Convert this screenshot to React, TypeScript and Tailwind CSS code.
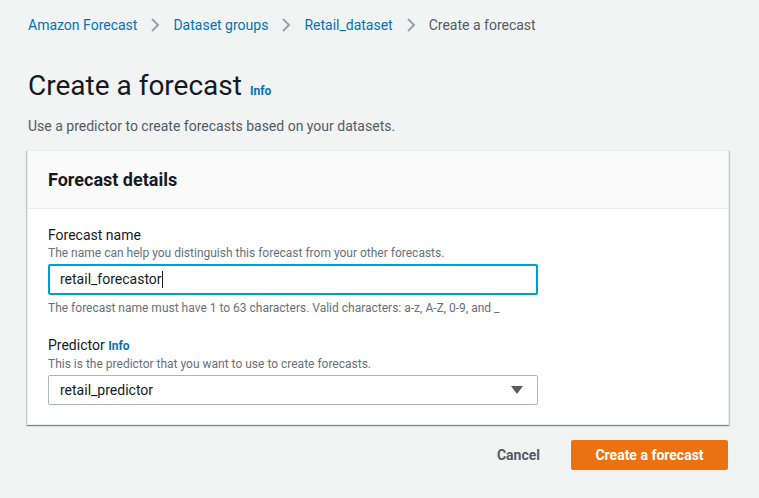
import React from "react";

const font = { fontFamily: "Roboto, 'Liberation Sans', sans-serif" };

function Chevron() {
  return (
    <svg width="10" height="16" viewBox="0 0 10 16" className="mx-[13px]">
      <path d="M2 2 L8 8 L2 14" fill="none" stroke="#95a5a6" strokeWidth="2" />
    </svg>
  );
}

export default function App() {
  return (
    <div className="min-h-[498px] w-full bg-[#f2f3f3] text-[#16191f]" style={font}>
      <div className="px-[28px]">
        <nav className="flex items-center pt-[16px] h-[34px] text-[14px]">
          <span className="text-[#0073bb]">Amazon Forecast</span>
          <Chevron />
          <span className="text-[#0073bb]">Dataset groups</span>
          <Chevron />
          <span className="text-[#0073bb]">Retail_dataset</span>
          <Chevron />
          <span className="text-[#545b64]">Create a forecast</span>
        </nav>
        <div className="mt-[34px] flex items-baseline">
          <h1 className="text-[28px] leading-[36px] font-normal">Create a forecast</h1>
          <span className="ml-[8px] text-[12px] font-bold text-[#0073bb]">Info</span>
        </div>
        <p className="mt-[12px] text-[14px] leading-[20px] text-[#545b64]">
          Use a predictor to create forecasts based on your datasets.
        </p>
        <div className="mt-[14px] w-[702px] -ml-px bg-white border border-[#eaeded] shadow-[0_1px_1px_0_rgba(0,28,36,0.3),1px_1px_1px_0_rgba(0,28,36,0.15),-1px_1px_1px_0_rgba(0,28,36,0.15)]">
          <div className="h-[58px] bg-[#fafafa] border-b border-[#eaeded] flex items-center px-[20px]">
            <h2 className="text-[18px] font-bold">Forecast details</h2>
          </div>
          <div className="px-[20px] pt-[16px] pb-[19px]">
            <div className="text-[14px] leading-[20px]">Forecast name</div>
            <div className="text-[12px] leading-[16px] text-[#687078]">
              The name can help you distinguish this forecast from your other forecasts.
            </div>
            <div className="mt-[3px] w-[490px] h-[31px] border-2 border-[#00a1c9] rounded-[2px] flex items-center px-[10px] text-[14px]">
              retail_forecastor<span className="inline-block w-px h-[17px] bg-[#16191f]"></span>
            </div>
            <div className="mt-[5px] text-[12px] leading-[16px] text-[#687078]">
              The forecast name must have 1 to 63 characters. Valid characters: a-z, A-Z, 0-9, and _
            </div>
            <div className="mt-[19px] text-[14px] leading-[20px]">
              Predictor <span className="text-[12px] font-bold text-[#0073bb]">Info</span>
            </div>
            <div className="text-[12px] leading-[16px] text-[#687078]">
              This is the predictor that you want to use to create forecasts.
            </div>
            <div className="mt-[3px] w-[490px] h-[30px] border border-[#aab7b8] rounded-[2px] flex items-center justify-between pl-[11px] pr-[14px] text-[14px]">
              <span>retail_predictor</span>
              <svg width="12" height="10" viewBox="0 0 12 10">
                <path d="M0 1 L12 1 L6 9 Z" fill="#545b64" />
              </svg>
            </div>
          </div>
        </div>
        <div className="mt-[15px] w-[700px] flex justify-end items-center">
          <button className="text-[14px] font-bold text-[#545b64] mr-[31px]">Cancel</button>
          <button className="h-[30px] w-[157px] bg-[#ec7211] text-white text-[14px] font-bold rounded-[2px]">
            Create a forecast
          </button>
        </div>
      </div>
    </div>
  );
}
